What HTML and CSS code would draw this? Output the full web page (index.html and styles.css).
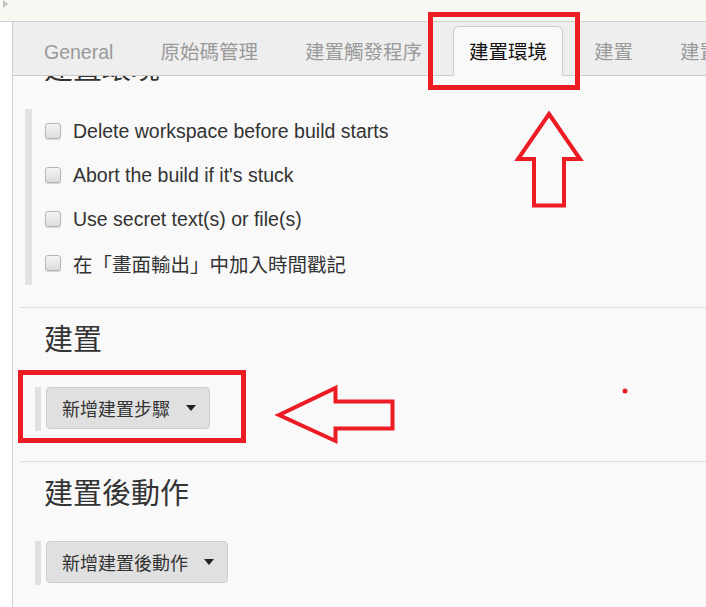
FILE: index.html
```html
<!DOCTYPE html>
<html lang="zh-Hant">
<head>
    <meta charset="UTF-8">
    <meta name="viewport" content="width=device-width, initial-scale=1.0">
    <title>建置環境</title>
    <link rel="stylesheet" href="styles.css">
</head>
<body>
    <div class="topbar"><span class="toggle"></span></div>

    <div class="layout">
        <div class="side"></div>
        <div class="main">
            <nav class="tabs">
                <span class="tab">General</span>
                <span class="tab">原始碼管理</span>
                <span class="tab">建置觸發程序</span>
                <span class="tab active">建置環境</span>
                <span class="tab">建置</span>
                <span class="tab">建置後動作</span>
            </nav>

            <div class="content">
                <!-- heading scrolled under the tab bar -->
                <div class="clipped"><h2 class="section-title">建置環境</h2></div>

                <div class="options">
                    <label class="option"><span class="check"></span>Delete workspace before build starts</label>
                    <label class="option"><span class="check"></span>Abort the build if it's stuck</label>
                    <label class="option"><span class="check"></span>Use secret text(s) or file(s)</label>
                    <label class="option"><span class="check"></span>在「畫面輸出」中加入時間戳記</label>
                </div>

                <section class="section">
                    <h2 class="section-title">建置</h2>
                    <div class="step">
                        <button class="add-btn">新增建置步驟<span class="caret"></span></button>
                    </div>
                </section>

                <section class="section">
                    <h2 class="section-title">建置後動作</h2>
                    <div class="step">
                        <button class="add-btn">新增建置後動作<span class="caret"></span></button>
                    </div>
                </section>
            </div>
        </div>
    </div>

    <svg class="annotations" width="706" height="607" viewBox="0 0 706 607">
        <rect x="430.5" y="14.5" width="147" height="73" fill="none" stroke="#ed1c24" stroke-width="5"/>
        <polygon points="549,114 580,159 564,159 564,205.5 534,205.5 534,159 518,159" fill="none" stroke="#ed1c24" stroke-width="4"/>
        <rect x="20.5" y="372.5" width="223" height="68" fill="none" stroke="#ed1c24" stroke-width="5"/>
        <polygon points="279,415 335.5,388 335.5,401.5 392.5,401.5 392.5,428.5 335.5,428.5 335.5,441" fill="none" stroke="#ed1c24" stroke-width="4"/>
        <circle cx="625" cy="391" r="2.5" fill="#ed1c24"/>
    </svg>
</body>
</html>
```

FILE: styles.css
```css
body {
    margin: 0;
    font-family: "Liberation Sans", "Noto Sans CJK TC", sans-serif;
    background-color: #f9f9f9;
    height: 607px;
    overflow: hidden;
    position: relative;
}
.topbar {
    height: 21px;
    background-color: #f6f8f1;
    border-bottom: 1px solid #d0d0d0;
    position: relative;
}
.toggle {
    position: absolute;
    left: 3px;
    top: 0;
    border-left: 5px solid #c2c2c2;
    border-top: 4px solid transparent;
    border-bottom: 4px solid transparent;
}
.layout {
    display: flex;
    height: 585px;
}
.side {
    width: 12px;
    background: #fff;
    border-right: 1px solid #d0d0d0;
}
.main {
    flex: 1;
    min-width: 0;
    overflow: hidden;
    background-color: #f9f9f9;
}
.tabs {
    display: flex;
    align-items: flex-end;
    gap: 15px;
    height: 53px;
    padding-left: 15px;
    background-color: #eeeeee;
    border-bottom: 1px solid #cccccc;
    white-space: nowrap;
}
.tab {
    flex-shrink: 0;
    height: 49px;
    line-height: 46px;
    padding: 3px 16px 0;
    font-size: 19.5px;
    color: #9a9a9a;
    box-sizing: border-box;
}
.tab.active {
    height: 50px;
    margin-bottom: -1px;
    padding: 2px 15px 0;
    background-color: #f9f9f9;
    border: 1px solid #cccccc;
    border-bottom: none;
    border-radius: 6px 6px 0 0;
    color: #111;
}
.content {
    padding-left: 7px;
}
.section-title {
    margin: 0;
    font-size: 29px;
    font-weight: normal;
    line-height: 34px;
    color: #333;
    font-family: "Noto Sans CJK TC", sans-serif;
}
.clipped {
    height: 5px;
    overflow: hidden;
    margin-left: 24px;
}
.clipped .section-title {
    margin-top: -27px;
}
.options {
    margin: 28px 0 22px 5px;
    border-left: 7px solid #e3e3e3;
    padding-left: 13px;
}
.option {
    display: flex;
    align-items: center;
    gap: 12px;
    height: 44px;
    font-size: 19.5px;
    color: #333;
}
.check {
    width: 14px;
    height: 14px;
    border: 1px solid #b5b5b5;
    border-radius: 3px;
    background: linear-gradient(#f5f5f5, #dcdcdc);
    box-shadow: 0 1px 1px rgba(0, 0, 0, 0.15);
}
.section {
    border-top: 1px solid #dddddd;
}
.section .section-title {
    margin: 12px 0 0 24px;
}
.step {
    display: flex;
    margin: 33px 0 30px 15px;
    border-left: 6px solid #e0e0e0;
    padding: 0 0 2px 5px;
}
.add-btn {
    display: flex;
    align-items: center;
    gap: 16px;
    height: 42px;
    padding: 0 13px 0 15px;
    font-family: "Liberation Sans", "Noto Sans CJK TC", sans-serif;
    font-size: 18px;
    color: #333;
    background-color: #e0e0e0;
    border: 1px solid #cccccc;
    border-radius: 4px;
}
.caret {
    border-left: 5px solid transparent;
    border-right: 5px solid transparent;
    border-top: 6px solid #222;
}
.annotations {
    position: absolute;
    top: 0;
    left: 0;
    pointer-events: none;
}
```
